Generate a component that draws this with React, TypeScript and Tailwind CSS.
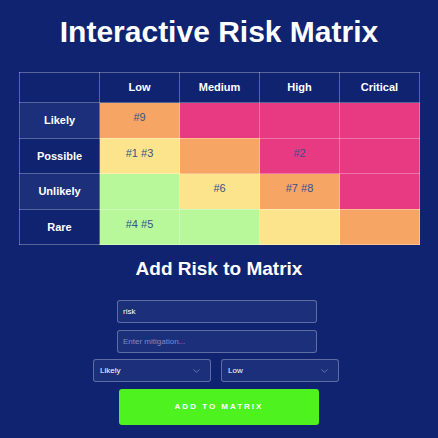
import { useState } from 'react'
import { ChevronDown } from 'lucide-react'

const impacts = ['Low', 'Medium', 'High', 'Critical']
const likelihoods = ['Likely', 'Possible', 'Unlikely', 'Rare']

const colors: Record<string, string> = {
  g: 'bg-[#b8f89a]',
  y: 'bg-[#fce48c]',
  o: 'bg-[#f6a564]',
  p: 'bg-[#e83a82]',
}

const grid = [
  ['o', 'p', 'p', 'p'],
  ['y', 'o', 'p', 'p'],
  ['g', 'y', 'o', 'p'],
  ['g', 'g', 'y', 'o'],
]

const initialRisks = [
  { id: 1, l: 'Possible', i: 'Low' },
  { id: 2, l: 'Possible', i: 'High' },
  { id: 3, l: 'Possible', i: 'Low' },
  { id: 4, l: 'Rare', i: 'Low' },
  { id: 5, l: 'Rare', i: 'Low' },
  { id: 6, l: 'Unlikely', i: 'Medium' },
  { id: 7, l: 'Unlikely', i: 'High' },
  { id: 8, l: 'Unlikely', i: 'High' },
  { id: 9, l: 'Likely', i: 'Low' },
]

const font = { fontFamily: "'Liberation Sans', Arial, sans-serif" }

export default function App() {
  const [risks, setRisks] = useState(initialRisks)
  const [name, setName] = useState('risk')
  const [mitigation, setMitigation] = useState('')
  const [likely, setLikely] = useState('Likely')
  const [impact, setImpact] = useState('Low')

  const add = () => {
    setRisks([...risks, { id: risks.length + 1, l: likely, i: impact }])
    setName('')
    setMitigation('')
  }

  return (
    <div style={font} className="min-h-screen bg-[#0f2370] text-white px-[19px] pb-6">
      <h1 className="pt-[14px] text-center text-[30px] leading-[36px] font-bold">Interactive Risk Matrix</h1>

      <table className="mt-[22px] w-[400px] border-collapse table-fixed">
        <thead>
          <tr className="h-[30px]">
            <th className="w-[80px] border border-white/30" />
            {impacts.map(h => (
              <th key={h} className="w-[80px] border border-white/30 text-[11px] font-bold">
                {h}
              </th>
            ))}
          </tr>
        </thead>
        <tbody>
          {likelihoods.map((l, r) => (
            <tr key={l} className="h-[35.5px]">
              <th className={`border border-white/30 text-[11px] font-bold ${r % 2 === 0 ? 'bg-[#1b2f7b]' : ''}`}>
                {l}
              </th>
              {impacts.map((imp, c) => (
                <td
                  key={imp}
                  className={`border border-white/30 align-top pt-[8px] text-center text-[11px] leading-[13px] text-[#35528f] ${colors[grid[r][c]]}`}
                >
                  {risks.filter(x => x.l === l && x.i === imp).map(x => `#${x.id}`).join(' ')}
                </td>
              ))}
            </tr>
          ))}
        </tbody>
      </table>

      <h2 className="mt-[12px] text-center text-[19px] leading-[23px] font-bold">Add Risk to Matrix</h2>

      <div className="mt-[20px] flex flex-col items-center gap-[6.5px] pr-[4px]">
        <input
          value={name}
          onChange={e => setName(e.target.value)}
          placeholder="Enter risk..."
          className="block w-[200px] h-[23px] rounded-[3px] border border-white/30 bg-[#1c2f7b] px-[5px] text-[8px] text-white outline-none placeholder:text-[#7d8cc4]"
        />
        <input
          value={mitigation}
          onChange={e => setMitigation(e.target.value)}
          placeholder="Enter mitigation..."
          className="block w-[200px] h-[23px] rounded-[3px] border border-white/30 bg-[#1c2f7b] px-[5px] text-[8px] text-white outline-none placeholder:text-[#7d8cc4]"
        />
        <div className="flex gap-[10px] pr-[2px]">
          {[
            { v: likely, set: setLikely, opts: likelihoods },
            { v: impact, set: setImpact, opts: impacts },
          ].map((s, k) => (
            <div key={k} className="relative w-[118px] h-[23px]">
              <select
                value={s.v}
                onChange={e => s.set(e.target.value)}
                className="block w-full h-full appearance-none rounded-[3px] border border-white/30 bg-[#1c2f7b] pl-[6px] text-[8px] font-normal text-white outline-none"
              >
                {s.opts.map(o => (
                  <option key={o}>{o}</option>
                ))}
              </select>
              <ChevronDown
                size={11}
                strokeWidth={1.5}
                className="pointer-events-none absolute right-[9px] top-1/2 -translate-y-1/2 text-[#7f8ebf]"
              />
            </div>
          ))}
        </div>
      </div>

      <div className="mt-[6.5px] flex justify-center">
        <button
          onClick={add}
          className="w-[200px] h-[36px] rounded-[3px] bg-[#4df21f] text-[8px] font-bold tracking-[2px] text-white"
        >
          ADD TO MATRIX
        </button>
      </div>
    </div>
  )
}
